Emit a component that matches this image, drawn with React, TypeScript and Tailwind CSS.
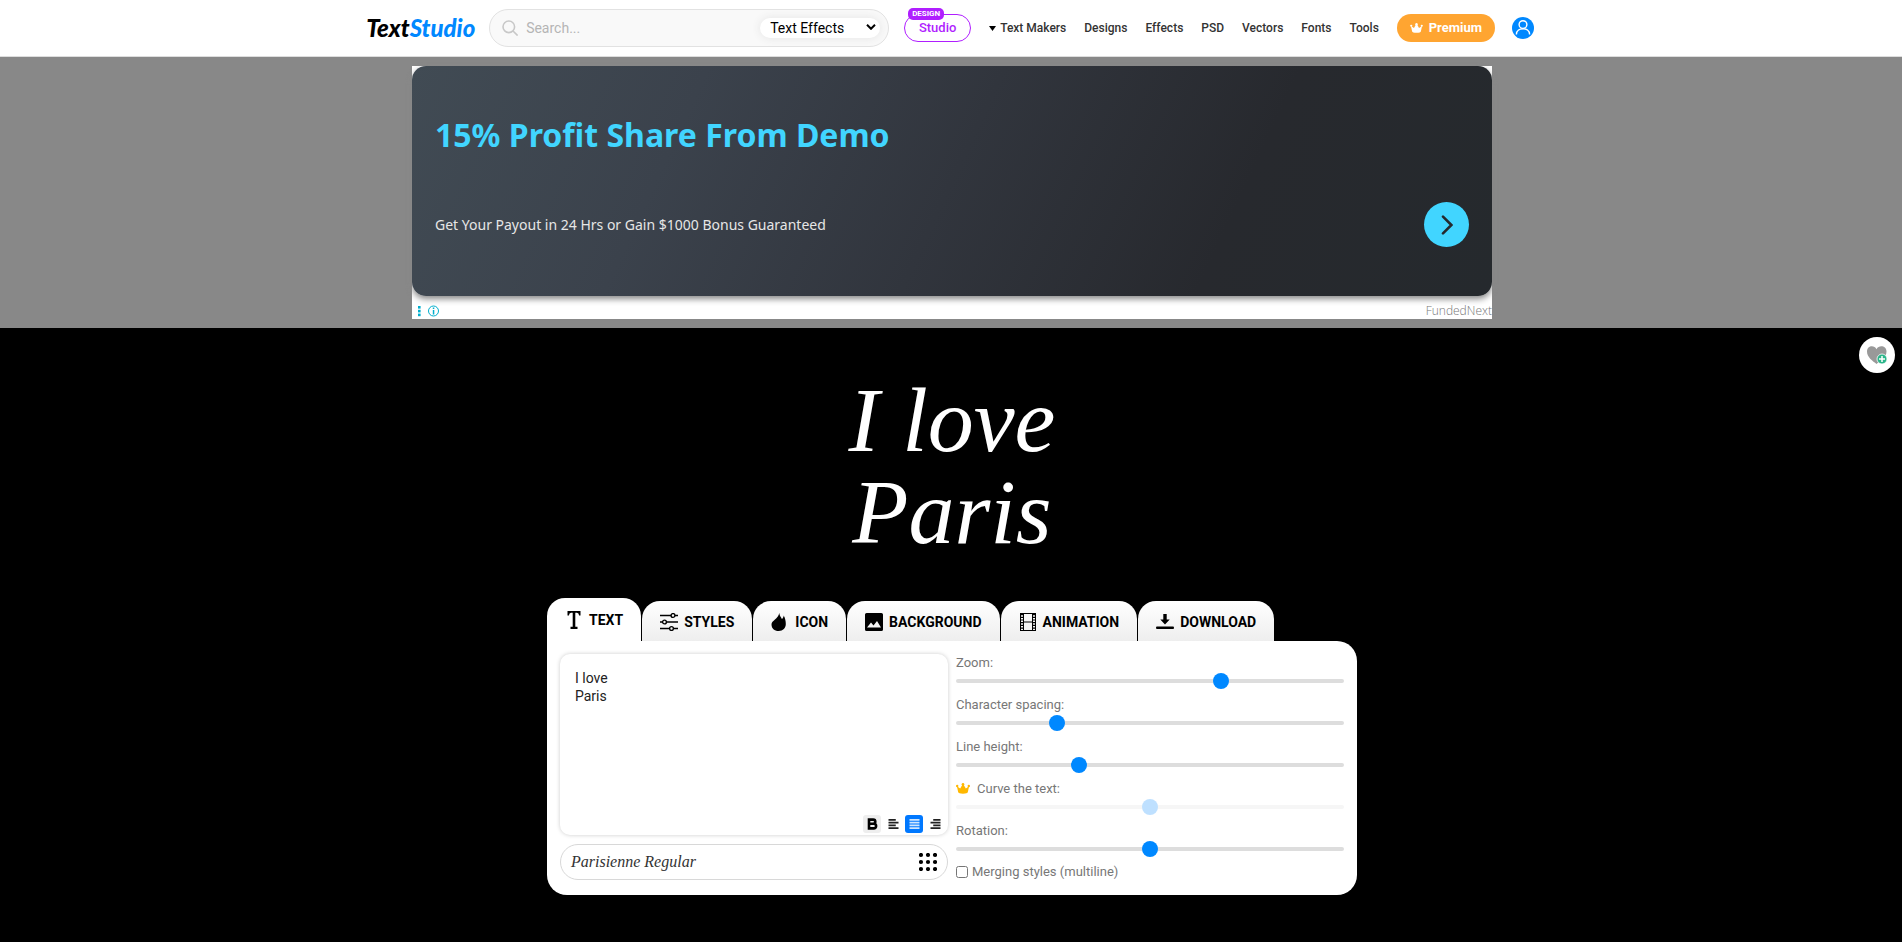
import { useState } from 'react';
import type { ReactNode } from 'react';

const navLinks = ['Designs', 'Effects', 'PSD', 'Vectors', 'Fonts', 'Tools'];

interface Control {
  id: string;
  label: string;
  value: number;
  premium?: boolean;
}

const controls: Control[] = [
  { id: 'zoom', label: 'Zoom:', value: 69 },
  { id: 'spacing', label: 'Character spacing:', value: 25 },
  { id: 'line-height', label: 'Line height:', value: 31 },
  { id: 'curve', label: 'Curve the text:', value: 50, premium: true },
  { id: 'rotation', label: 'Rotation:', value: 50 },
];

function CrownIcon({ className }: { className: string }) {
  return (
    <svg viewBox="0 0 14 11" className={className} fill="currentColor" aria-hidden="true">
      <circle cx="1.2" cy="3" r="1.2" />
      <circle cx="7" cy="1.3" r="1.3" />
      <circle cx="12.8" cy="3" r="1.2" />
      <path d="M.9 3.3 4.2 5.4 6.5 1.5h1l2.3 3.9 3.3-2.1-1.3 6q-.3 1.4-4.8 1.4t-4.8-1.4z" />
    </svg>
  );
}

function Header() {
  return (
    <header className="flex h-[57px] items-center justify-center border-b border-[#ddd] bg-white pr-[2px]">
      <a
        href="#home"
        className="w-[107px] font-['Lato','Liberation_Sans',sans-serif] text-[24px] leading-8 font-black text-black italic"
      >
        Text<span className="text-[#0088ff]">Studio</span>
      </a>

      <form className="ml-4 flex h-[38px] w-[400px] items-center rounded-full border border-[#e2e2e2] bg-[#f9f9f9] pr-2 pl-3">
        <svg viewBox="0 0 16 16" className="h-4 w-4 shrink-0" fill="none" stroke="#c8c8c8" strokeWidth="1.6">
          <circle cx="6.8" cy="6.8" r="5.8" />
          <path d="m11 11 4.6 4.6" />
        </svg>
        <input
          type="search"
          aria-label="Search"
          placeholder="Search..."
          className="ml-2 min-w-0 flex-1 bg-transparent text-sm outline-none placeholder:text-[#b5b5b5]"
        />
        <div className="relative">
          <select
            aria-label="Category"
            className="h-5 w-[120px] appearance-none rounded-full bg-white pl-[10px] text-sm leading-5 text-black shadow-[0_0_10px_#e4e4e4]"
          >
            <option>Text Effects</option>
          </select>
          <svg
            viewBox="0 0 10 6"
            className="pointer-events-none absolute top-2 right-1 h-[6px] w-[10px]"
            fill="none"
            stroke="#000"
            strokeWidth="2"
          >
            <path d="m1 .8 4 4 4-4" />
          </svg>
        </div>
      </form>

      <a
        href="#studio"
        className="relative ml-[15px] flex h-7 w-[67px] items-center justify-center rounded-full border border-[#b01eff] text-[13px] font-medium text-[#b01eff]"
      >
        Studio
        <span className="absolute -top-[7px] left-[3px] rounded-[5px] bg-[#b01eff] px-1 text-[8px] leading-3 font-bold text-white">
          DESIGN
        </span>
      </a>

      <nav className="ml-[18px] flex items-center gap-[18px] text-xs font-medium text-[#333]">
        <a href="#makers" className="flex items-center gap-1">
          <svg viewBox="0 0 7 5" className="h-[5px] w-[7px]">
            <path d="M0 0h7L3.5 5z" fill="#000" />
          </svg>
          Text Makers
        </a>
        {navLinks.map((link) => (
          <a key={link} href={`#${link.toLowerCase()}`}>
            {link}
          </a>
        ))}
      </nav>

      <a
        href="#premium"
        className="ml-[18px] flex h-7 w-[98px] items-center justify-center gap-[6px] rounded-full bg-[#ffa531] text-[13px] font-bold text-white"
      >
        <CrownIcon className="h-[10px] w-[13px]" />
        Premium
      </a>

      <a href="#account" aria-label="Account" className="ml-[17px]">
        <svg viewBox="0 0 22 22" className="h-[22px] w-[22px]" fill="none" stroke="#fff" strokeWidth="1.4">
          <circle cx="11" cy="11" r="11" fill="#0088ff" stroke="none" />
          <circle cx="11" cy="7.6" r="3.9" />
          <path d="M4.4 17.4c.2-7.6 13-7.6 13.2 0" />
        </svg>
      </a>
    </header>
  );
}

function AdBanner() {
  return (
    <div className="bg-[#888] py-[9px] pl-[2px]">
      <div className="mx-auto max-w-[1080px] bg-white font-['Noto_Sans',sans-serif]">
        <div className="flex h-[230px] flex-col rounded-[14px] bg-[linear-gradient(115deg,#414b54_0%,#3b424c_25%,#31353d_50%,#27292e_75%,#25292d_100%)] px-[23px] pt-[46px] shadow-[0_3px_6px_#888]">
          <h2 className="text-[32px] leading-[46px] font-bold text-[#41d5ff]">15% Profit Share From Demo</h2>
          <div className="mt-11 flex items-center justify-between">
            <p className="text-sm text-[#e6e6e6]">Get Your Payout in 24 Hrs or Gain $1000 Bonus Guaranteed</p>
            <button
              type="button"
              aria-label="Open"
              className="flex h-[45px] w-[45px] items-center justify-center rounded-full bg-[#41d5ff]"
            >
              <svg viewBox="0 0 12 20" className="h-5 w-3" fill="none" stroke="#25292d" strokeWidth="2.6" strokeLinecap="round">
                <path d="m2 1.6 8.4 8.4L2 18.4" />
              </svg>
            </button>
          </div>
        </div>
        <div className="flex h-[23px] items-end pb-[2px] pl-[5px]">
          <svg viewBox="0 0 22 12" className="h-3 w-[22px]" fill="#00aecd">
            <rect x="1" y="1" width="2.6" height="2.6" />
            <rect x="1" y="4.8" width="2.6" height="2.6" />
            <rect x="1" y="8.6" width="2.6" height="2.6" />
            <circle cx="16.5" cy="6" r="5" fill="none" stroke="#00aecd" />
            <path d="M15.8 2.6h1.5v1.5h-1.5zM15.8 5h1.5v4.4h-1.5z" />
          </svg>
          <span className="ml-auto font-['Open_Sans',sans-serif] text-xs leading-3 font-light text-[#777]">FundedNext</span>
        </div>
      </div>
    </div>
  );
}

function Tab({ label, active, icon }: { label: string; active?: boolean; icon: ReactNode }) {
  return (
    <button
      type="button"
      role="tab"
      aria-selected={!!active}
      className={`flex items-center gap-[6px] rounded-t-[18px] px-[18px] text-sm font-bold text-black ${
        active ? 'h-[43px] bg-white' : 'h-10 bg-linear-to-b from-white to-[#eee] pt-[2px]'
      }`}
    >
      <svg viewBox="0 0 18 18" className="h-[18px] w-[18px]">
        {icon}
      </svg>
      {label}
    </button>
  );
}

function Tabs() {
  return (
    <div role="tablist" className="flex items-end gap-px">
      <Tab
        active
        label="TEXT"
        icon={<path d="M2.5 0h13v4.5h-1.4q-.2-2.8-2.2-2.8h-1.6v14.1h2.2V18h-7v-2.2h2.2V1.700H6.100q-2 0-2.200 2.800H2.500z" />}
      />
      <Tab
        label="STYLES"
        icon={
          <g fill="none" stroke="#000" strokeWidth="1.4">
            <path d="M0 2.5h11m4 0h3M0 9h2.3m4.4 0H18M0 15.5h9.3m4.4 0H18" />
            <circle cx="13" cy="2.5" r="1.9" />
            <circle cx="4.5" cy="9" r="1.9" />
            <circle cx="11.5" cy="15.5" r="1.9" />
          </g>
        }
      />
      <Tab
        label="ICON"
        icon={<path d="M8.3 0c.2 3 1.900 4.300 2.600 6 .9-.6 1.700-1.900 1.800-3.500 1.500 2.500 2.100 5.700 2.100 8.500 0 4-2.800 7-7.100 7S.5 15.200.5 11.400C.5 7.500 7.200 6.200 8.300 0z" />}
      />
      <Tab
        label="BACKGROUND"
        icon={
          <path
            fillRule="evenodd"
            d="M1.6 0h14.8Q18 0 18 1.6v14.8q0 1.6-1.6 1.6H1.6Q0 18 0 16.4V1.6Q0 0 1.6 0zM2 14.500h14L12 8l-3.500 4.500L6 9.500z"
          />
        }
      />
      <Tab
        label="ANIMATION"
        icon={
          <g fill="none" stroke="#000">
            <rect x="1.5" y=".5" width="15" height="17" />
            <path d="M4.5 0v18m9-18v18M4.5 9h9" />
            <path d="M3 1v16m12-16v16" strokeWidth="2" strokeDasharray="1.2 1.5" />
          </g>
        }
      />
      <Tab
        label="DOWNLOAD"
        icon={<path d="M7.3 1h3.400v5.500h3L9 11.600 4.300 6.500h3zM1 13.500h16q1 0 1 1.300T17 16H1q-1 0-1-1.200t1-1.300z" />}
      />
    </div>
  );
}

function AlignIcon({ align, color }: { align: 'left' | 'full' | 'right'; color: string }) {
  const rows = {
    left: 'M0 1h8M0 4h11M0 7h8M0 10h11',
    full: 'M0 1h11M0 4h11M0 7h11M0 10h11',
    right: 'M3 1h8M0 4h11M3 7h8M0 10h11',
  };
  return (
    <svg viewBox="0 0 11 11" className="h-[10px] w-[11px]">
      <path d={rows[align]} stroke={color} strokeWidth="2" />
    </svg>
  );
}

function TextEditor() {
  const [text, setText] = useState('I love\nParis');
  const toolButton = 'flex h-[18px] w-[18px] items-center justify-center rounded-[3px]';

  return (
    <div className="flex-1">
      <div className="relative">
        <textarea
          aria-label="Text"
          value={text}
          onChange={(e) => setText(e.target.value)}
          className="block h-[181px] w-full resize-none rounded-[10px] bg-white p-[15px] text-sm leading-[18px] text-[#222] shadow-[0_0_4px_#ccc] outline-none"
        />
        <div className="absolute right-[4px] bottom-[2px] flex gap-[3px]">
          <button type="button" aria-label="Bold" className={`${toolButton} bg-[#eee]`}>
            <svg viewBox="0 0 14 14" className="h-[14px] w-[14px]" fill="none" stroke="#000" strokeWidth="2.6">
              <path d="M4 2.6h4.2a2.1 2.1 0 0 1 0 4.2H4zM4 6.8h4.8a2.3 2.3 0 0 1 0 4.6H4z" />
            </svg>
          </button>
          <button type="button" aria-label="Align left" className={toolButton}>
            <AlignIcon align="left" color="#222" />
          </button>
          <button type="button" aria-label="Align center" className={`${toolButton} bg-[#0078ff]`}>
            <AlignIcon align="full" color="#cfe6ff" />
          </button>
          <button type="button" aria-label="Align right" className={toolButton}>
            <AlignIcon align="right" color="#222" />
          </button>
        </div>
      </div>

      <button
        type="button"
        className="mt-[9px] flex h-9 w-full items-center justify-between rounded-full border border-[#d8d8d8] px-[10px]"
      >
        <span className="font-['Liberation_Serif',serif] text-base text-[#333] italic">Parisienne Regular</span>
        <svg viewBox="0 0 18 18" className="h-[18px] w-[18px]">
          {[2, 9, 16].map((y) => [2, 9, 16].map((x) => <circle key={`${x}-${y}`} cx={x} cy={y} r="2.1" />))}
        </svg>
      </button>
    </div>
  );
}

function Slider({ id, label, value, premium }: Control) {
  const [current, setCurrent] = useState(value);

  return (
    <div className="h-[42px]">
      <label htmlFor={id} className="flex h-[19px] items-center text-[13px] text-[#777]">
        {premium && <CrownIcon className="mr-[7px] h-[11px] w-[14px] text-[#ffb800]" />}
        {label}
      </label>
      <input
        id={id}
        type="range"
        min={0}
        max={100}
        value={current}
        disabled={premium}
        onChange={(e) => setCurrent(Number(e.target.value))}
        className="mt-[7px] block h-1 w-full appearance-none rounded-full bg-[#ddd] disabled:opacity-25 [&::-webkit-slider-thumb]:h-4 [&::-webkit-slider-thumb]:w-4 [&::-webkit-slider-thumb]:appearance-none [&::-webkit-slider-thumb]:rounded-full [&::-webkit-slider-thumb]:bg-[#0088ff]"
      />
    </div>
  );
}

function SettingsPanel() {
  return (
    <div className="flex gap-2 rounded-[20px] rounded-tl-none bg-white p-[13px] pb-[14px]">
      <TextEditor />
      <div className="flex-1 -mt-px">
        {controls.map((control) => (
          <Slider key={control.id} {...control} />
        ))}
        <label className="flex h-[18px] items-center gap-1 text-[13px] text-[#777]">
          <input type="checkbox" className="h-3 w-3" />
          Merging styles (multiline)
        </label>
      </div>
    </div>
  );
}

export default function App() {
  return (
    <div className="min-h-screen bg-black font-['Roboto',sans-serif]">
      <Header />
      <AdBanner />
      <main className="relative pb-12 pl-[2px]">
        <button
          type="button"
          aria-label="Add to favorites"
          className="absolute top-[9px] right-[7px] flex h-9 w-9 items-center justify-center rounded-full bg-white"
        >
          <svg viewBox="0 0 22 20" className="h-5 w-[22px]">
            <path d="M10.5 19C7 16 1 12.5 1 6.5 1 .8 8-.5 10.5 4.2 13-.5 20.5.8 20.5 6.500c0 6-6.500 9.500-10 12.500z" fill="#999" />
            <circle cx="16" cy="14" r="5" fill="#2bb58a" stroke="#fff" strokeWidth=".8" />
            <path d="M16 11v6m-3-3h6" stroke="#fff" strokeWidth="1.5" />
          </svg>
        </button>

        <p className="pt-[46px] pb-10 text-center font-['Liberation_Serif',serif] text-[92px] leading-[92px] whitespace-pre-line text-white italic">
          {'I love\nParis'}
        </p>

        <div className="mx-auto max-w-[810px]">
          <Tabs />
          <SettingsPanel />
        </div>
      </main>
    </div>
  );
}
